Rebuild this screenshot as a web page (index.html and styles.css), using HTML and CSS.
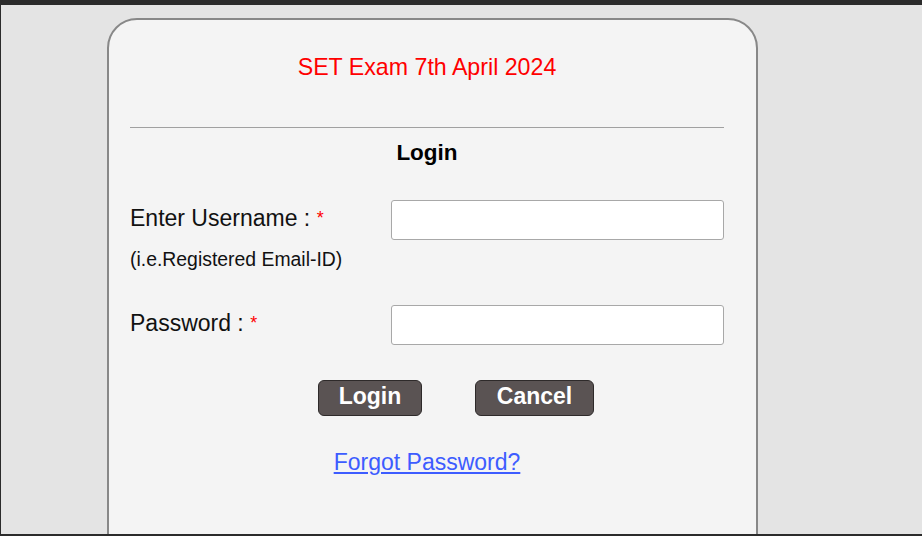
FILE: index.html
```html
<!DOCTYPE html>
<html lang="en">
<head>
  <meta charset="UTF-8" />
  <title>SET Exam Login</title>
  <meta name="viewport" content="width=device-width, initial-scale=1" />
  <link rel="stylesheet" href="styles.css">
</head>
<body>
  <div class="frame">
    <div class="card">
      <h2 class="exam-title">SET Exam 7th April 2024</h2>
      <hr class="divider">
      <h3 class="login-title">Login</h3>
      <form class="login-form">
        <div class="row">
          <div class="label-box">
            <label for="username">Enter Username : <span class="req">*</span></label>
            <div class="hint">(i.e.Registered Email-ID)</div>
          </div>
          <input type="text" id="username" class="field">
        </div>
        <div class="row row-pass">
          <div class="label-box">
            <label for="password">Password : <span class="req">*</span></label>
          </div>
          <input type="password" id="password" class="field">
        </div>
        <div class="actions">
          <button type="button" class="btn btn-login">Login</button>
          <button type="button" class="btn btn-cancel">Cancel</button>
        </div>
      </form>
      <div class="forgot">
        <a href="#">Forgot Password?</a>
      </div>
    </div>
  </div>
</body>
</html>
```

FILE: styles.css
```css
html, body {
  margin: 0;
  height: 100%;
  background-color: #2b2b2b;
  overflow: hidden;
}
.frame {
  box-sizing: border-box;
  margin: 5px 0 0 1px;
  height: 529px;
  background-color: #e4e4e4;
  padding: 13px 0 0 106px;
  font-family: "Liberation Sans", Arial, sans-serif;
  overflow: hidden;
}
.card {
  box-sizing: border-box;
  width: 651px;
  height: 600px;
  background-color: #f4f4f4;
  border: 2px solid #888;
  border-radius: 30px;
  padding: 0 32px 0 21px;
}
.exam-title {
  margin: 34px 0 0;
  text-align: center;
  color: #ff0000;
  font-size: 23.2px;
  font-weight: normal;
  line-height: 26px;
}
.divider {
  border: none;
  border-top: 1px solid #a0a0a0;
  margin: 47px 0 0;
  height: 0;
}
.login-title {
  margin: 12px 0 0;
  text-align: center;
  font-size: 22.5px;
  line-height: 26px;
  color: #000;
}
.login-form {
  margin-top: 34px;
}
.row {
  display: grid;
  grid-template-columns: 261px 333px;
  align-items: start;
}
.row-pass {
  margin-top: 35px;
}
.label-box label {
  display: block;
  font-size: 23px;
  line-height: 26px;
  margin-top: 5px;
  color: #111;
}
.req {
  color: #ff0000;
  font-size: 18px;
  vertical-align: 2px;
}
.hint {
  font-size: 19.4px;
  line-height: 22px;
  margin-top: 17px;
  color: #111;
}
.field {
  box-sizing: border-box;
  width: 333px;
  height: 40px;
  border: 1px solid #a8a8a8;
  border-radius: 3px;
  background-color: #fff;
  font-size: 18px;
}
.actions {
  display: flex;
  gap: 53px;
  margin: 35px 0 0 188px;
}
.btn {
  box-sizing: border-box;
  height: 36px;
  background-color: #5a5353;
  border: 1px solid #2e2a2a;
  border-radius: 6px;
  color: #fff;
  font-family: "Liberation Sans", Arial, sans-serif;
  font-size: 23px;
  font-weight: bold;
  padding: 0 0 3px;
  cursor: pointer;
}
.btn-login {
  width: 104px;
}
.btn-cancel {
  width: 119px;
}
.forgot {
  text-align: center;
  margin-top: 33px;
  font-size: 23px;
  line-height: 26px;
}
.forgot a {
  color: #3d5cff;
}
```
